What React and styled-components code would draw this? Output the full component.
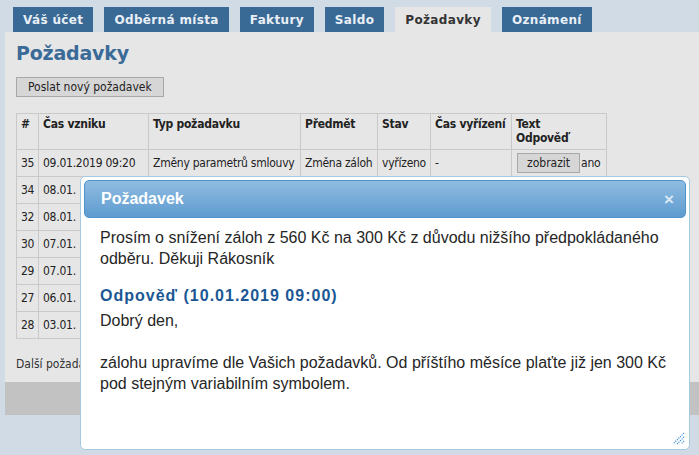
import React from 'react'
import styled, { createGlobalStyle } from 'styled-components'

const GlobalStyle = createGlobalStyle`
  body {
    margin: 0;
    background: #d0dbe5;
    font-family: "DejaVu Sans Condensed", "DejaVu Sans", sans-serif;
  }
`

const Page = styled.div`
  position: relative;
  width: 699px;
  height: 455px;
  overflow: hidden;
  padding-top: 7px;
  box-sizing: border-box;
`

const Tabs = styled.div`
  display: flex;
  gap: 11px;
  padding-left: 13px;
`

const Tab = styled.div`
  height: 25px;
  line-height: 26px;
  padding: 0 10px;
  background: ${p => (p.active ? '#e6e6e6' : '#396a96')};
  color: ${p => (p.active ? '#333' : '#e9eff5')};
  font-family: "DejaVu Sans", sans-serif;
  font-weight: bold;
  font-size: 12px;
  letter-spacing: 0.35px;
`

const Panel = styled.div`
  margin-left: 5px;
  background: #e6e6e6;
  height: 350px;
  padding: 8px 11px 0;
  box-sizing: border-box;
`

const Footer = styled.div`
  margin-left: 5px;
  height: 33px;
  background: #c2c2c2;
`

const Title = styled.h1`
  margin: 0;
  font-family: "DejaVu Sans", sans-serif;
  font-size: 19px;
  line-height: 26px;
  letter-spacing: -0.2px;
  color: #3a6a97;
`

const Button = styled.button`
  font-family: "DejaVu Sans Condensed", "DejaVu Sans", sans-serif;
  font-size: 12px;
  color: #222;
  background: #d6d6d6;
  border: 1px solid #a8a8a8;
  height: 20px;
  padding: 0 ${p => (p.small ? '9px' : '11px')};
  margin: ${p => (p.small ? '0 1px 0 1px' : '11px 0 0')};
  cursor: pointer;
`

const Table = styled.table`
  margin-top: 16px;
  border-collapse: collapse;
  table-layout: fixed;
  width: 590px;
  font-size: 12px;
  letter-spacing: -0.25px;
  color: #222;
`

const Th = styled.th`
  border: 1px solid #c9c9c9;
  text-align: left;
  vertical-align: top;
  padding: 3px 4px;
  line-height: 14px;
  height: 36px;
  box-sizing: border-box;
  font-weight: bold;
  white-space: nowrap;
`

const Td = styled.td`
  border: 1px solid #c9c9c9;
  padding: 0 4px;
  height: 26px;
  line-height: 14px;
  white-space: nowrap;
  overflow: hidden;
`

const Note = styled.div`
  margin-top: 18px;
  font-size: 12px;
  color: #333;
`

const Dialog = styled.div`
  position: absolute;
  left: 80px;
  top: 176px;
  width: 610px;
  height: 274px;
  box-sizing: border-box;
  background: #fff;
  border: 1px solid #a6c9e2;
  border-radius: 5px;
  padding: 3px;
  display: flex;
  flex-direction: column;
  font-family: "Liberation Sans", Arial, sans-serif;
`

const DialogHead = styled.div`
  height: 38px;
  box-sizing: border-box;
  display: flex;
  align-items: center;
  justify-content: space-between;
  padding: 0 11px 0 16px;
  border: 1px solid #4f93ca;
  border-radius: 5px;
  background: linear-gradient(#8fbce1, #5e9bd0);
  color: #fff;
  font-weight: bold;
  font-size: 16px;
`

const Close = styled.span`
  color: #dce9f5;
  font-size: 17px;
  font-weight: bold;
  line-height: 1;
`

const DialogBody = styled.div`
  position: relative;
  flex: 1;
  padding: 9px 14px 0 16px;
  font-size: 16px;
  line-height: 21px;
  color: #262626;
`

const Para = styled.p`
  margin: 0;
`

const Answer = styled.h3`
  margin: 16px 0 4px;
  font-size: 16px;
  line-height: 21px;
  letter-spacing: 1px;
  color: #1b5794;
`

const Grip = styled.svg`
  position: absolute;
  right: 1px;
  bottom: 1px;
`

const cols = [
  ['#', 22], ['Čas vzniku', 110], ['Typ požadavku', 152], ['Předmět', 77],
  ['Stav', 53], ['Čas vyřízení', 81], [<>Text<br />Odpověď</>, 95],
]

const rows = [
  ['34', '08.01.'],
  ['32', '08.01.'],
  ['30', '07.01.'],
  ['29', '07.01.'],
  ['27', '06.01.'],
  ['28', '03.01.'],
]

const App = () => {
  const tabs = ['Váš účet', 'Odběrná místa', 'Faktury', 'Saldo', 'Požadavky', 'Oznámení']
  return (
    <Page>
      <GlobalStyle />
      <Tabs>
        {tabs.map(t => <Tab key={t} active={t === 'Požadavky'}>{t}</Tab>)}
      </Tabs>
      <Panel>
        <Title>Požadavky</Title>
        <Button>Poslat nový požadavek</Button>
        <Table>
          <colgroup>
            {cols.map(([, w], i) => <col key={i} style={{ width: w }} />)}
          </colgroup>
          <thead>
            <tr>{cols.map(([c], i) => <Th key={i}>{c}</Th>)}</tr>
          </thead>
          <tbody>
            <tr>
              <Td>35</Td><Td>09.01.2019 09:20</Td><Td>Změny parametrů smlouvy</Td>
              <Td>Změna záloh</Td><Td>vyřízeno</Td><Td>-</Td>
              <Td><Button small>zobrazit</Button>ano</Td>
            </tr>
            {rows.map(r => (
              <tr key={r[0]}>
                <Td>{r[0]}</Td><Td>{r[1]}</Td>
                <Td /><Td /><Td /><Td /><Td />
              </tr>
            ))}
          </tbody>
        </Table>
        <Note>Další požada</Note>
      </Panel>
      <Footer />

      <Dialog>
        <DialogHead>
          <span>Požadavek</span>
          <Close>×</Close>
        </DialogHead>
        <DialogBody>
          <Para>Prosím o snížení záloh z 560 Kč na 300 Kč z důvodu nižšího předpokládaného odběru. Děkuji Rákosník</Para>
          <Answer>Odpověď (10.01.2019 09:00)</Answer>
          <Para>
            Dobrý den,<br /><br />
            zálohu upravíme dle Vašich požadavků. Od příštího měsíce plaťte již jen 300 Kč pod stejným variabilním symbolem.
          </Para>
          <Grip width="13" height="13" viewBox="0 0 13 13">
            <g stroke="#3d8ee0" strokeWidth="1.2" strokeDasharray="1.2 1">
              <line x1="12" y1="1" x2="1" y2="12" />
              <line x1="12" y1="5" x2="5" y2="12" />
              <line x1="12" y1="9" x2="9" y2="12" />
            </g>
          </Grip>
        </DialogBody>
      </Dialog>
    </Page>
  )
}

export default App
